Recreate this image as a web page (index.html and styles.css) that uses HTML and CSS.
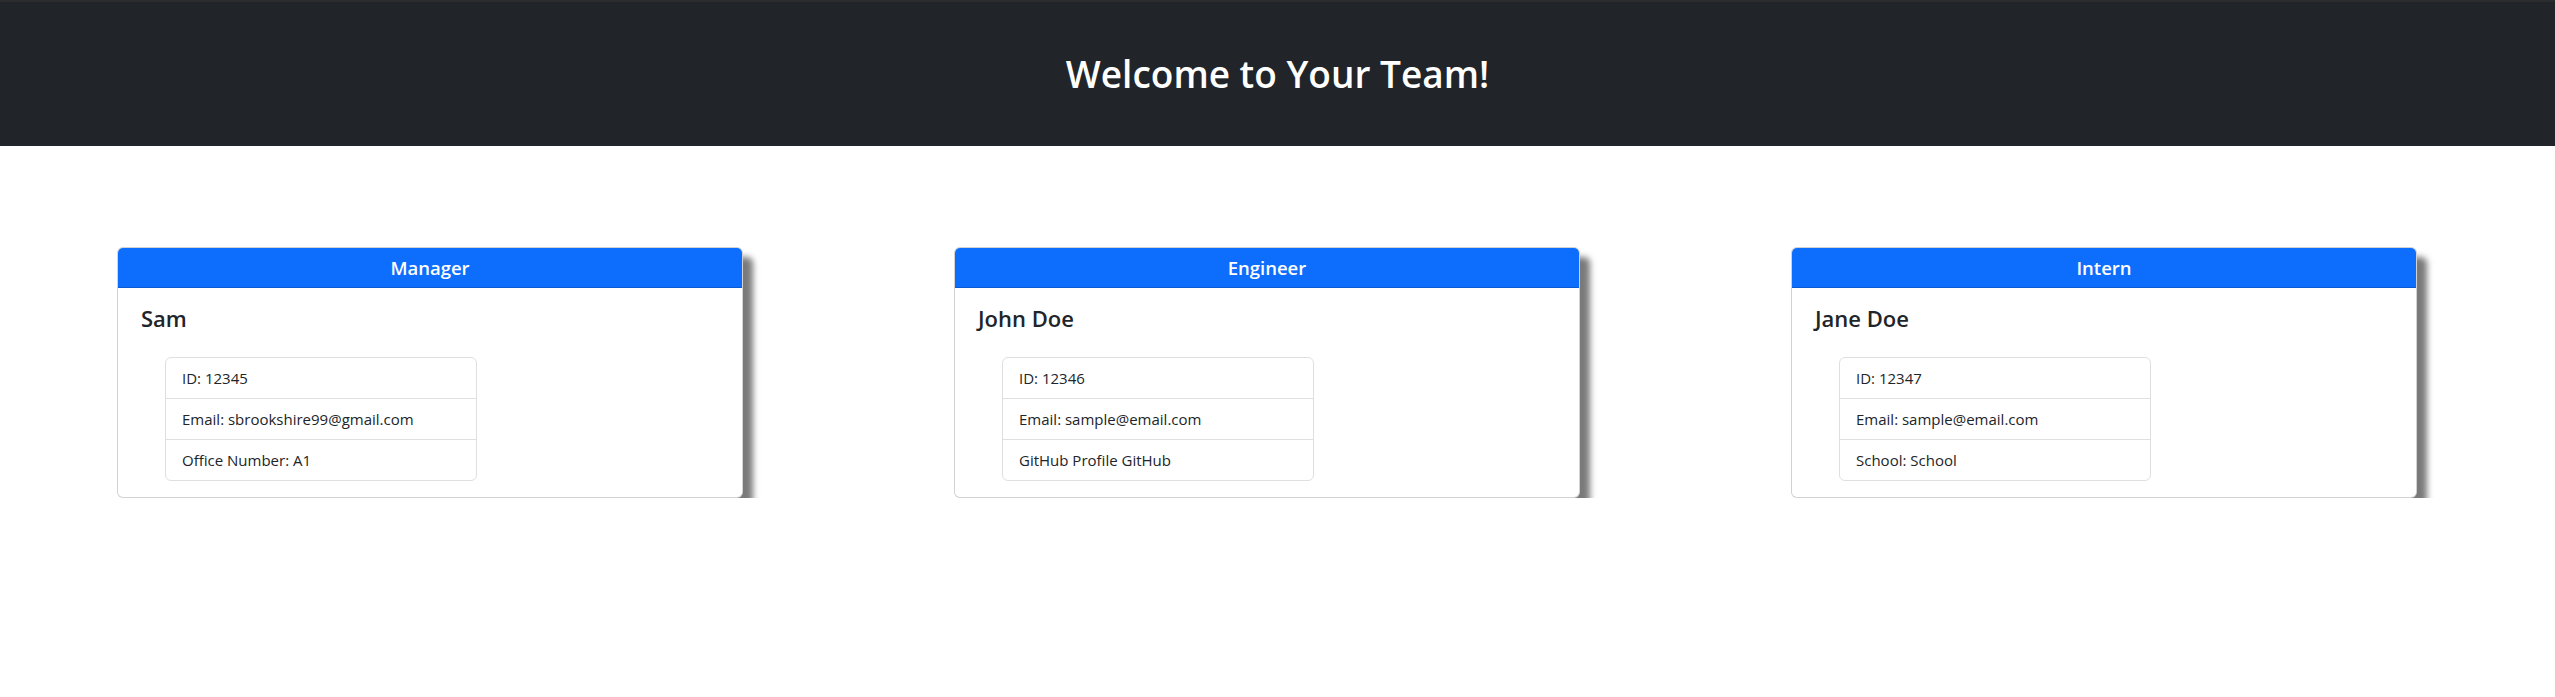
FILE: index.html
```html
<!DOCTYPE html>
<html lang="en">
<head>
<meta charset="utf-8">
<title>My Team</title>
<link rel="stylesheet" href="styles.css">
</head>
<body>
<header class="banner">
  <h1 class="banner-title">Welcome to Your Team!</h1>
</header>
<main class="team">
  <article class="card">
    <div class="card-header"><h5 class="role">Manager</h5></div>
    <div class="card-body">
      <h4 class="name">Sam</h4>
      <ul class="details">
        <li class="detail">ID: 12345</li>
        <li class="detail">Email: sbrookshire99@gmail.com</li>
        <li class="detail">Office Number: A1</li>
      </ul>
    </div>
  </article>
  <article class="card">
    <div class="card-header"><h5 class="role">Engineer</h5></div>
    <div class="card-body">
      <h4 class="name">John Doe</h4>
      <ul class="details">
        <li class="detail">ID: 12346</li>
        <li class="detail">Email: sample@email.com</li>
        <li class="detail">GitHub Profile GitHub</li>
      </ul>
    </div>
  </article>
  <article class="card">
    <div class="card-header"><h5 class="role">Intern</h5></div>
    <div class="card-body">
      <h4 class="name">Jane Doe</h4>
      <ul class="details">
        <li class="detail">ID: 12347</li>
        <li class="detail">Email: sample@email.com</li>
        <li class="detail">School: School</li>
      </ul>
    </div>
  </article>
</main>
</body>
</html>
```
FILE: styles.css
```css
* { box-sizing: border-box; }
html, body {
  margin: 0;
  padding: 0;
  background: #ffffff;
  color: #212529;
  font-family: "Open Sans", "Noto Sans", "Liberation Sans", sans-serif;
  font-size: 16px;
  line-height: 1.5;
}
.banner {
  background: #212529;
  border-top: 2px solid #2b2c2e;
  padding: 48px 0;
  text-align: center;
}
.banner-title {
  margin: 0;
  color: #ffffff;
  font-size: 37px;
  font-weight: 600;
  line-height: 48px;
}
.team {
  display: flex;
  align-items: flex-start;
  gap: 211px;
  padding: 101px 0 0 117px;
}
.card {
  width: 626px;
  flex: 0 0 626px;
  background: #ffffff;
  border: 1px solid rgba(0, 0, 0, 0.175);
  border-radius: 6px;
  box-shadow: 10px 10px 6px #7a7a7a;
}
.card-header {
  background: #0d6efd;
  color: #ffffff;
  text-align: center;
  padding: 8px 16px 7px;
  border-bottom: 1px solid rgba(0, 0, 0, 0.175);
  border-radius: 5px 5px 0 0;
}
.role {
  margin: 0;
  font-size: 18.5px;
  font-weight: 600;
  line-height: 24px;
}
.card-body {
  padding: 16px 22px 16px 23px;
}
.name {
  margin: 0 0 24px;
  font-size: 22px;
  font-weight: 600;
  line-height: 28.8px;
}
.details {
  list-style: none;
  margin: 0 0 0 24px;
  padding: 0;
  width: 312px;
  border: 1px solid #dfdfdf;
  border-radius: 6px;
}
.detail {
  padding: 8px 16px;
  font-size: 15px;
  line-height: 24px;
  border-top: 1px solid #dfdfdf;
}
.detail:first-child { border-top: 0; }
```
